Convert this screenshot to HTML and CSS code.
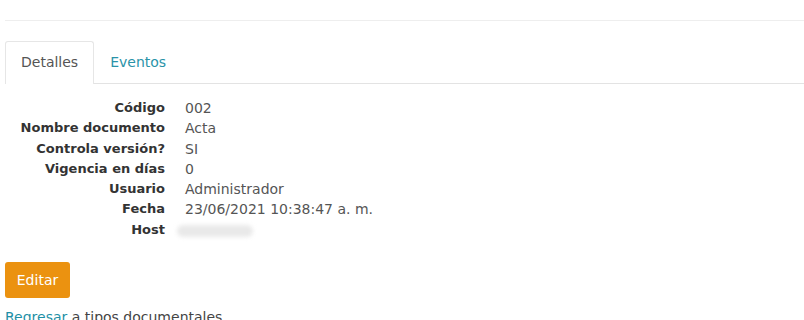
FILE: index.html
```html
<!DOCTYPE html>
<html>

<head>
  <meta charset="UTF-8" />
  <meta name="viewport" content="width=device-width, initial-scale=1.0" />
  <title>Tipo documental</title>
  <link rel="stylesheet" href="styles.css">
</head>

<body>
  <div class="page-header"></div>

  <ul class="nav-tabs">
    <li class="tab active"><a href="#">Detalles</a></li>
    <li class="tab"><a href="#">Eventos</a></li>
  </ul>

  <dl class="details">
    <dt>Código</dt>
    <dd>002</dd>
    <dt>Nombre documento</dt>
    <dd>Acta</dd>
    <dt>Controla versión?</dt>
    <dd>SI</dd>
    <dt>Vigencia en días</dt>
    <dd>0</dd>
    <dt>Usuario</dt>
    <dd>Administrador</dd>
    <dt>Fecha</dt>
    <dd>23/06/2021 10:38:47 a. m.</dd>
    <dt>Host</dt>
    <dd><span class="blurred"></span></dd>
  </dl>

  <div class="actions">
    <button class="btn-edit">Editar</button>
  </div>

  <p class="back"><a href="#">Regresar</a> a tipos documentales</p>
</body>

</html>
```

FILE: styles.css
```css
body {
  margin: 0;
  padding: 0 0 0 5px;
  font-family: "DejaVu Sans", "Open Sans", sans-serif;
  font-size: 14px;
  color: #333;
  background: #fff;
}

.page-header {
  height: 20px;
  border-bottom: 1px solid #eeeeee;
}

.nav-tabs {
  display: flex;
  list-style: none;
  margin: 20px 0 0 0;
  padding: 0;
  border-bottom: 1px solid #e3e3e3;
}

.tab a {
  display: block;
  height: 41px;
  line-height: 41px;
  padding: 0 15px;
  border: 1px solid transparent;
  border-bottom: none;
  border-radius: 3px 3px 0 0;
  margin-bottom: -1px;
  text-decoration: none;
  color: #2a93a8;
}

.tab.active a {
  color: #555;
  background: #fff;
  border-color: #e6e6e6;
  height: 42px;
}

.details {
  display: grid;
  grid-template-columns: 160px 1fr;
  column-gap: 20px;
  margin: 14px 0 0 0;
  line-height: 20.3px;
}

.details dt {
  text-align: right;
  font-weight: bold;
  font-size: 13px;
  color: #333;
}

.details dd {
  margin: 0;
  font-size: 14px;
  color: #555;
}

.blurred {
  display: inline-block;
  vertical-align: middle;
  width: 76px;
  height: 12px;
  margin-left: -8px;
  border-radius: 6px;
  background: #e9e9e9;
  filter: blur(2px);
}

.actions {
  margin-top: 22px;
}

.btn-edit {
  font-family: inherit;
  font-size: 14px;
  color: #fff;
  background-color: #eb9210;
  border: none;
  border-radius: 3px;
  width: 65px;
  height: 36px;
  cursor: pointer;
}

.back {
  margin: 9px 0 0 0;
  line-height: 20px;
  color: #444;
}

.back a {
  color: #1e8fa6;
  text-decoration: none;
}
```
